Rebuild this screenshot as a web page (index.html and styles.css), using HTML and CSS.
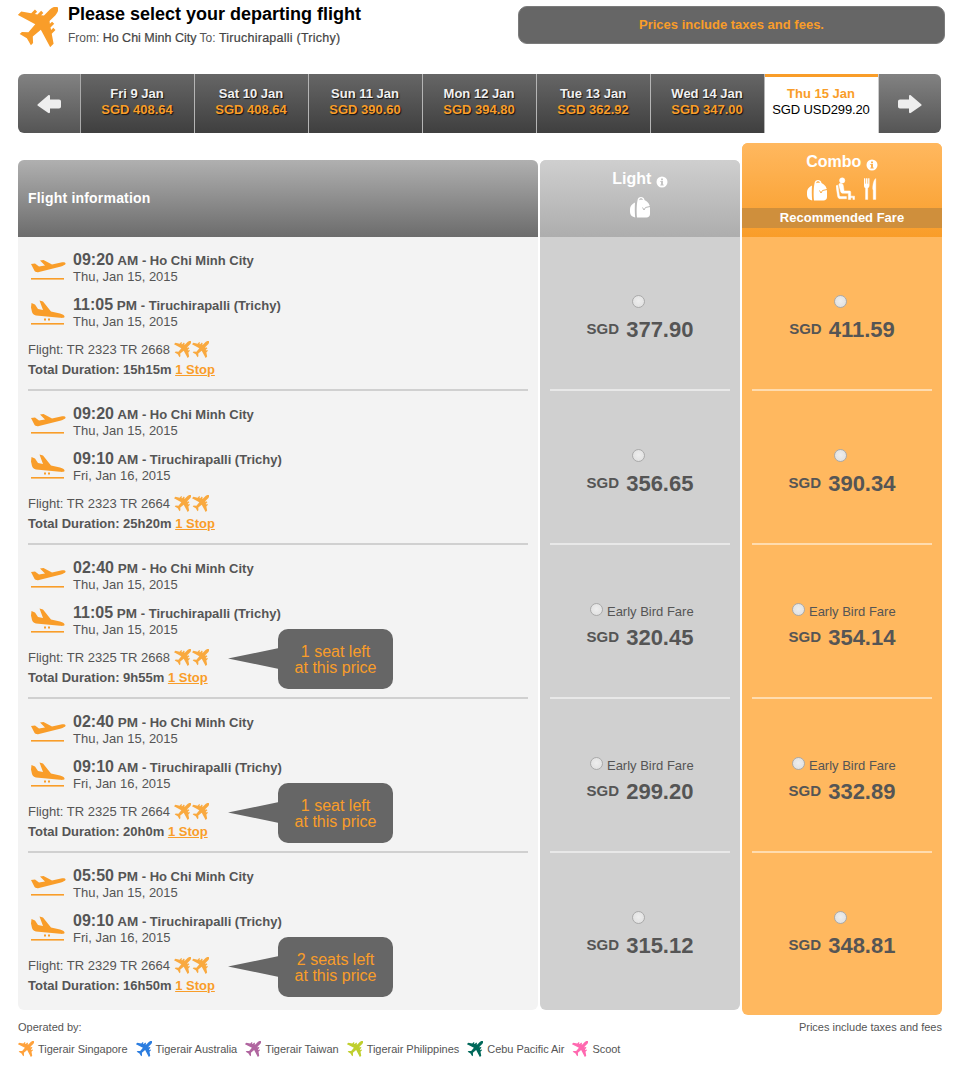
FILE: index.html
```html
<!DOCTYPE html>
<html lang="en">
<head>
<meta charset="utf-8">
<title>Select departing flight</title>
<link rel="stylesheet" href="styles.css">
</head>
<body>
<svg class="defs" width="0" height="0" aria-hidden="true">
  <symbol id="plane" viewBox="-6 0.500 45.500 45.500">
    <g transform="rotate(45 20 20)"><path d="M20 -7C22.500 -7 24.500 -3 24.500 1L24.500 10.500L27 12.500V9H30.500V15L33 16.500V13H36.500V19L46 25.500V31L24.500 24.500L23.500 36.500L29 41.500V45L20 42.500L11 45V41.500L16.500 36.500L15.500 24.500L-6 31V25.500L3.500 19V13H7V16.500L9.500 15V9H13V12.500L15.500 10.500V1C15.500 -3 17.500 -7 20 -7Z"/></g>
  </symbol>
  <symbol id="takeoff" viewBox="0 0 36 24">
    <path d="M1 7L5 6.500L9 9.500L15 8.500L10 3.500L13.500 3L22 7.500L31 5.500C34 5 36 5.500 35.500 7C35 8 33 8.800 31 9.500L9 15C7 15.500 5 15 4.300 13.500Z"/>
    <rect x="1" y="21" width="33" height="1.600"/>
  </symbol>
  <symbol id="landing" viewBox="0 0 36 26">
    <path d="M1 8.500L1.500 4L5 5.500L8 10L13 11L9.500 1.500L13 2.500L21 12.500L30 14.500C33 15.200 35 16.500 34.500 18C34 19 32 19 30 18.800L6 16.500C4 16 2.500 15 2 13Z"/>
    <rect x="14" y="19.500" width="2" height="2"/><rect x="18" y="19.500" width="2" height="2"/>
    <rect x="1" y="24" width="33" height="1.600"/>
  </symbol>
  <symbol id="bag" viewBox="0 0 20 21">
    <path fill-rule="evenodd" d="M7.500 3.500C7.500 1 9.500 0 11 0C12.500 0 14.500 1 14.500 3C18 4.500 20 7.500 20 11V17C20 19 18.500 20.500 16.500 20.500H7C6.500 16 6.500 8 7.500 3.500ZM9.200 3.300C10.500 2.800 11.800 2.700 13 3C12.800 1.800 11.800 1.300 11 1.300C10.200 1.300 9.300 1.800 9.200 3.300Z"/>
    <path d="M5 5.500C2 7 0 9 0 12V15C0 18 2 20 5.200 20.500C4.700 15 4.700 9.500 5 5.500Z"/>
    <path class="bag-mark" d="M20 9.500L15.500 10.500L14 13L12.500 10.500" fill="none" stroke-width="1"/>
  </symbol>
  <symbol id="seat" viewBox="0 0 20 24">
    <circle cx="6.500" cy="3" r="2.800"/>
    <path d="M3 7.500C3 6.500 4 6 5 6C6.500 6 7.500 7 7.700 8.500L8.500 14H14C15 14 15.500 14.500 15.500 15.500V23H13V16.500H7.500C5.800 16.500 5 15.500 4.700 14ZM0 8.500L2 8L3.500 18.500C3.700 19.500 4.300 20 5.500 20H11V22.200H4.500C3 22.200 2 21.200 1.700 19.500ZM15.500 19.500H19.500V23H17.800V21H15.500Z"/>
  </symbol>
  <symbol id="cutlery" viewBox="0 0 16 24">
    <path d="M0 0H1.200V6H2.300V0H3.700V6H4.800V0H6V8C6 9.500 5 10.500 4.300 11V24H1.700V11C1 10.500 0 9.500 0 8Z"/>
    <path d="M10.500 13V24H13.500V0C11.500 1 10.500 5 10 9C9.800 11.500 10 13 10.500 13Z"/>
  </symbol>
  <symbol id="info" viewBox="0 0 12 12">
    <path fill-rule="evenodd" d="M6 0.500A5.500 5.500 0 1 1 6 11.500A5.500 5.500 0 1 1 6 0.500ZM5 2.500V4.200H7V2.500ZM4.300 5V6H5V8.500H4.300V9.500H7.700V8.500H7V5Z"/>
  </symbol>
  <symbol id="arrow-left" viewBox="0 0 24 20">
    <path d="M0.500 10.500L11 1.500C12 0.800 13 1 13 2V5.500H22C23.200 5.500 24 6.300 24 7.500V12.500C24 13.700 23.200 14.500 22 14.500H13V18C13 19.200 12 19.500 11 18.800L0.500 11.500Z"/>
  </symbol>
  <symbol id="arrow-right" viewBox="0 0 24 20">
    <path d="M23.500 10.500L13 1.500C12 0.800 11 1 11 2V5.500H2C0.800 5.500 0 6.300 0 7.500V12.500C0 13.700 0.800 14.500 2 14.500H11V18C11 19.200 12 19.500 13 18.800L23.500 11.500Z"/>
  </symbol>
</svg>

<header class="top">
  <svg class="top-plane"><use href="#plane"/></svg>
  <div class="top-text">
    <h1>Please select your departing flight</h1>
    <p>From: <b>Ho Chi Minh City</b> To: <b class="to">Tiruchirapalli (Trichy)</b></p>
  </div>
  <div class="notice">Prices include taxes and fees.</div>
</header>

<nav class="dates">
  <div class="nav nav-prev"><svg class="arrow"><use href="#arrow-left"/></svg></div>
  <div class="day"><b>Fri 9 Jan</b><span>SGD 408.64</span></div>
  <div class="day"><b>Sat 10 Jan</b><span>SGD 408.64</span></div>
  <div class="day"><b>Sun 11 Jan</b><span>SGD 390.60</span></div>
  <div class="day"><b>Mon 12 Jan</b><span>SGD 394.80</span></div>
  <div class="day"><b>Tue 13 Jan</b><span>SGD 362.92</span></div>
  <div class="day"><b>Wed 14 Jan</b><span>SGD 347.00</span></div>
  <div class="day day-on"><b>Thu 15 Jan</b><span>SGD USD299.20</span></div>
  <div class="nav nav-next"><svg class="arrow"><use href="#arrow-right"/></svg></div>
</nav>

<main class="fares">
  <section class="col col-info">
    <div class="head head-info">Flight information</div>

    <article class="flight">
      <div class="seg"><svg class="seg-icon"><use href="#takeoff"/></svg><div><div class="seg-time"><strong>09:20</strong> AM <em>- Ho Chi Minh City</em></div><div class="seg-date">Thu, Jan 15, 2015</div></div></div>
      <div class="seg"><svg class="seg-icon"><use href="#landing"/></svg><div><div class="seg-time"><strong>11:05</strong> PM <em>- Tiruchirapalli (Trichy)</em></div><div class="seg-date">Thu, Jan 15, 2015</div></div></div>
      <div class="fl-no">Flight: TR 2323 TR 2668 <svg class="mini"><use href="#plane"/></svg><svg class="mini"><use href="#plane"/></svg></div>
      <div class="fl-dur">Total Duration: 15h15m <a href="#">1 Stop</a></div>
    </article>

    <article class="flight">
      <div class="seg"><svg class="seg-icon"><use href="#takeoff"/></svg><div><div class="seg-time"><strong>09:20</strong> AM <em>- Ho Chi Minh City</em></div><div class="seg-date">Thu, Jan 15, 2015</div></div></div>
      <div class="seg"><svg class="seg-icon"><use href="#landing"/></svg><div><div class="seg-time"><strong>09:10</strong> AM <em>- Tiruchirapalli (Trichy)</em></div><div class="seg-date">Fri, Jan 16, 2015</div></div></div>
      <div class="fl-no">Flight: TR 2323 TR 2664 <svg class="mini"><use href="#plane"/></svg><svg class="mini"><use href="#plane"/></svg></div>
      <div class="fl-dur">Total Duration: 25h20m <a href="#">1 Stop</a></div>
    </article>

    <article class="flight">
      <div class="seg"><svg class="seg-icon"><use href="#takeoff"/></svg><div><div class="seg-time"><strong>02:40</strong> PM <em>- Ho Chi Minh City</em></div><div class="seg-date">Thu, Jan 15, 2015</div></div></div>
      <div class="seg"><svg class="seg-icon"><use href="#landing"/></svg><div><div class="seg-time"><strong>11:05</strong> PM <em>- Tiruchirapalli (Trichy)</em></div><div class="seg-date">Thu, Jan 15, 2015</div></div></div>
      <div class="fl-no">Flight: TR 2325 TR 2668 <svg class="mini"><use href="#plane"/></svg><svg class="mini"><use href="#plane"/></svg></div>
      <div class="fl-dur">Total Duration: 9h55m <a href="#">1 Stop</a></div>
      <div class="bubble">1 seat left<br>at this price</div>
    </article>

    <article class="flight">
      <div class="seg"><svg class="seg-icon"><use href="#takeoff"/></svg><div><div class="seg-time"><strong>02:40</strong> PM <em>- Ho Chi Minh City</em></div><div class="seg-date">Thu, Jan 15, 2015</div></div></div>
      <div class="seg"><svg class="seg-icon"><use href="#landing"/></svg><div><div class="seg-time"><strong>09:10</strong> AM <em>- Tiruchirapalli (Trichy)</em></div><div class="seg-date">Fri, Jan 16, 2015</div></div></div>
      <div class="fl-no">Flight: TR 2325 TR 2664 <svg class="mini"><use href="#plane"/></svg><svg class="mini"><use href="#plane"/></svg></div>
      <div class="fl-dur">Total Duration: 20h0m <a href="#">1 Stop</a></div>
      <div class="bubble">1 seat left<br>at this price</div>
    </article>

    <article class="flight flight-last">
      <div class="seg"><svg class="seg-icon"><use href="#takeoff"/></svg><div><div class="seg-time"><strong>05:50</strong> PM <em>- Ho Chi Minh City</em></div><div class="seg-date">Thu, Jan 15, 2015</div></div></div>
      <div class="seg"><svg class="seg-icon"><use href="#landing"/></svg><div><div class="seg-time"><strong>09:10</strong> AM <em>- Tiruchirapalli (Trichy)</em></div><div class="seg-date">Fri, Jan 16, 2015</div></div></div>
      <div class="fl-no">Flight: TR 2329 TR 2664 <svg class="mini"><use href="#plane"/></svg><svg class="mini"><use href="#plane"/></svg></div>
      <div class="fl-dur">Total Duration: 16h50m <a href="#">1 Stop</a></div>
      <div class="bubble">2 seats left<br>at this price</div>
    </article>
  </section>

  <section class="col col-light">
    <div class="head head-light">
      <div class="head-title">Light <svg class="info"><use href="#info"/></svg></div>
      <div class="head-icons"><svg class="ic-bag"><use href="#bag"/></svg></div>
    </div>
    <div class="fare"><div class="pick"><input type="radio" name="f"></div><div class="price"><small>SGD</small> 377.90</div></div>
    <div class="fare"><div class="pick"><input type="radio" name="f"></div><div class="price"><small>SGD</small> 356.65</div></div>
    <div class="fare"><div class="pick pick-early"><input type="radio" name="f"> Early Bird Fare</div><div class="price"><small>SGD</small> 320.45</div></div>
    <div class="fare"><div class="pick pick-early"><input type="radio" name="f"> Early Bird Fare</div><div class="price"><small>SGD</small> 299.20</div></div>
    <div class="fare fare-last"><div class="pick"><input type="radio" name="f"></div><div class="price"><small>SGD</small> 315.12</div></div>
  </section>

  <section class="col col-combo">
    <div class="head head-combo">
      <div class="head-title">Combo <svg class="info"><use href="#info"/></svg></div>
      <div class="head-icons"><svg class="ic-bag"><use href="#bag"/></svg><svg class="ic-seat"><use href="#seat"/></svg><svg class="ic-cut"><use href="#cutlery"/></svg></div>
      <div class="rec">Recommended Fare</div>
    </div>
    <div class="fare"><div class="pick"><input type="radio" name="f"></div><div class="price"><small>SGD</small> 411.59</div></div>
    <div class="fare"><div class="pick"><input type="radio" name="f"></div><div class="price"><small>SGD</small> 390.34</div></div>
    <div class="fare"><div class="pick pick-early"><input type="radio" name="f"> Early Bird Fare</div><div class="price"><small>SGD</small> 354.14</div></div>
    <div class="fare"><div class="pick pick-early"><input type="radio" name="f"> Early Bird Fare</div><div class="price"><small>SGD</small> 332.89</div></div>
    <div class="fare fare-last"><div class="pick"><input type="radio" name="f"></div><div class="price"><small>SGD</small> 348.81</div></div>
  </section>
</main>

<footer class="foot">
  <div class="foot-line"><span>Operated by:</span><span>Prices include taxes and fees</span></div>
  <ul class="ops">
    <li><svg class="op op-sg"><use href="#plane"/></svg>Tigerair Singapore</li>
    <li><svg class="op op-au"><use href="#plane"/></svg>Tigerair Australia</li>
    <li><svg class="op op-tw"><use href="#plane"/></svg>Tigerair Taiwan</li>
    <li><svg class="op op-ph"><use href="#plane"/></svg>Tigerair Philippines</li>
    <li><svg class="op op-ce"><use href="#plane"/></svg>Cebu Pacific Air</li>
    <li><svg class="op op-sc"><use href="#plane"/></svg>Scoot</li>
  </ul>
</footer>
</body>
</html>
```
FILE: styles.css
```css
* { box-sizing: border-box; }
html, body { margin: 0; padding: 0; }
body {
  width: 955px;
  height: 1067px;
  overflow: hidden;
  background: #fff;
  color: #555;
  font-family: "Liberation Sans", Arial, sans-serif;
  font-size: 13px;
}
.defs { position: absolute; }

/* header */
.top { display: flex; height: 74px; padding: 6px 10px 0 18px; }
.top-plane { width: 40px; height: 40px; margin-top: 1px; fill: #f99d29; flex: none; }
.top-text { margin-left: 10px; width: 450px; flex: none; }
.top-text h1 { margin: 0; font-size: 18px; line-height: 17px; color: #000; font-weight: 700; }
.top-text p { margin: 8px 0 0; font-size: 12px; line-height: 14px; }
.top-text b { font-weight: 400; font-size: 12.5px; color: #444; -webkit-text-stroke: 0.2px #444; }
.top-text .to { letter-spacing: 0.25px; }
.notice {
  width: 427px; height: 38px;
  border: 1px solid #7b7b7b; border-radius: 9px;
  background: #666;
  color: #f99d29;
  font-size: 13px; font-weight: 700; line-height: 36px; text-align: center;
}

/* date strip */
.dates { display: flex; width: 923px; height: 59px; margin-left: 18px; }
.nav { background: linear-gradient(#828282, #555); display: flex; align-items: center; justify-content: center; }
.nav-prev { width: 63px; border-radius: 6px 0 0 6px; border-right: 1px solid #aaa; }
.nav-next { width: 63px; border-radius: 0 6px 6px 0; border-left: 1px solid #ccc; }
.arrow { width: 24px; height: 20px; fill: #eee; }
.day {
  width: 114px;
  display: flex; flex-direction: column; align-items: center;
  padding: 12px 1px 0 0;
  background: linear-gradient(#666, #3f3f3f);
  border-right: 1px solid #b5b5b5;
  color: #f0f0f0;
  font-size: 13px; line-height: 16px;
  text-shadow: 1px 1px 1px #111;
}
.day b { font-weight: 700; }
.day span { color: #f99d29; font-weight: 700; }
.day-on {
  width: 113px; padding: 9px 1px 0 0;
  background: #fff; border: 0; border-top: 3px solid #f99d29;
  text-shadow: none; color: #f99d29;
}
.day-on span { color: #000; font-weight: 400; letter-spacing: -0.12px; }

/* fare table */
.fares { display: grid; grid-template-columns: 520px 200px 200px; column-gap: 2px; margin: 10px 0 0 18px; }
.col { display: flex; flex-direction: column; }
.col-info { margin-top: 17px; height: 850px; background: #f3f3f3; border-radius: 6px; }
.col-light { margin-top: 17px; height: 850px; background: #d0d0d0; border-radius: 6px; }
.col-combo { height: 872px; background: #ffb85f; border-radius: 6px; }
.head { color: #fff; font-weight: 700; border-radius: 6px 6px 0 0; }
.head-info {
  height: 77px; padding-left: 10px;
  font-size: 14px; line-height: 76px; letter-spacing: 0.2px;
  background: linear-gradient(#b0b0b0, #6c6c6c);
}
.head-light { height: 77px; padding-top: 9px; text-align: center; background: linear-gradient(#cfcfcf, #adadad); }
.head-combo { height: 94px; padding-top: 9px; text-align: center; background: linear-gradient(#ffb85f 0, #f99d29 100%); }
.head-title { font-size: 16px; line-height: 19px; }
.info { width: 12px; height: 12px; fill: #fff; vertical-align: -4px; }
.head-icons { display: flex; justify-content: center; align-items: flex-end; gap: 9px; margin-top: 9px; }
.ic-bag { width: 20px; height: 21px; fill: #fff; --mark: #b9b9b9; }
.head-combo .ic-bag { --mark: #fbab45; }
.bag-mark { stroke: var(--mark); }
.ic-seat { width: 19px; height: 24px; fill: #fff; stroke: #fff; stroke-width: 0.5; }
.ic-cut { width: 14px; height: 24px; fill: #fff; stroke: #fff; stroke-width: 0.4; }
.head-combo .head-icons { margin-top: 6px; height: 24px; }
.rec {
  height: 20px; margin-top: 7px;
  background: #cf8f3c;
  font-size: 13px; line-height: 20px;
}

/* flight row */
.flight { position: relative; height: 154px; padding: 14px 10px 0; }
.flight::after {
  content: ""; position: absolute; left: 10px; right: 10px; bottom: 0; height: 2px; background: #d0d0d0;
}
.flight-last::after { display: none; }
.seg { display: flex; height: 45px; padding-left: 2px; }
.seg-icon { width: 36px; height: 24px; margin-top: 6px; margin-right: 7px; fill: #f99d29; flex: none; }
.seg + .seg .seg-icon { height: 26px; margin-top: 3px; }
.seg-time { font-size: 13.5px; line-height: 18px; font-weight: 700; }
.seg-time strong { font-size: 16px; }
.seg-time em { font-style: normal; font-size: 13px; }
.seg-date { font-size: 13px; line-height: 14px; }
.fl-no { margin-top: -1px; line-height: 20px; font-size: 13px; white-space: nowrap; }
.mini { width: 17px; height: 17px; fill: #f9a93f; vertical-align: -4px; }
.mini + .mini { margin-left: 1px; }
.fl-dur { font-size: 13px; font-weight: 700; line-height: 20px; }
.fl-dur a { color: #f99d29; text-decoration: underline; }

.bubble {
  position: absolute; left: 260px; top: 84px;
  width: 115px; height: 60px; padding-top: 15px;
  background: #666; border-radius: 10px;
  color: #f99d29; font-size: 16px; line-height: 16px; text-align: center;
}
.bubble::before {
  content: ""; position: absolute; left: -50px; top: 19px;
  width: 51px; height: 21px;
  background: #666;
  clip-path: polygon(0 50%, 100% 0, 100% 100%);
}

/* fare cells */
.fare { position: relative; height: 154px; padding-top: 58px; text-align: center; }
.fare::after {
  content: ""; position: absolute; left: 10px; right: 10px; bottom: 0; height: 2px; background: rgba(255,255,255,.5);
}
.fare-last::after { display: none; }
.pick { height: 14px; font-size: 13px; line-height: 18px; padding-right: 4px; color: #555; }
.pick-early { padding-right: 0; padding-left: 4px; }
.pick input {
  appearance: none; -webkit-appearance: none;
  width: 13px; height: 13px; margin: 0; vertical-align: 0;
  border-radius: 50%;
  border: 1px solid #aaa;
  background: radial-gradient(circle at 50% 45%, #eee 0, #ddd 100%);
}
.price { margin-top: 7px; font-size: 22px; line-height: 28px; font-weight: 700; color: #555; }
.price small { font-size: 15px; margin-right: 1px; position: relative; top: -3px; }

/* footer */
.foot { margin: 6px 13px 0 18px; font-size: 11px; }
.foot-line { display: flex; justify-content: space-between; line-height: 13px; }
.ops { display: flex; list-style: none; margin: 7px 0 0; padding: 0; gap: 8px; line-height: 16px; letter-spacing: -0.03px; }
.ops li { display: flex; align-items: center; gap: 4px; white-space: nowrap; }
.op { width: 16px; height: 16px; }
.op-sg { fill: #ffa23c; }
.op-au { fill: #2b7de0; }
.op-tw { fill: #b0659f; }
.op-ph { fill: #bfcf2d; }
.op-ce { fill: #00685a; }
.op-sc { fill: #ff69b0; }
```
